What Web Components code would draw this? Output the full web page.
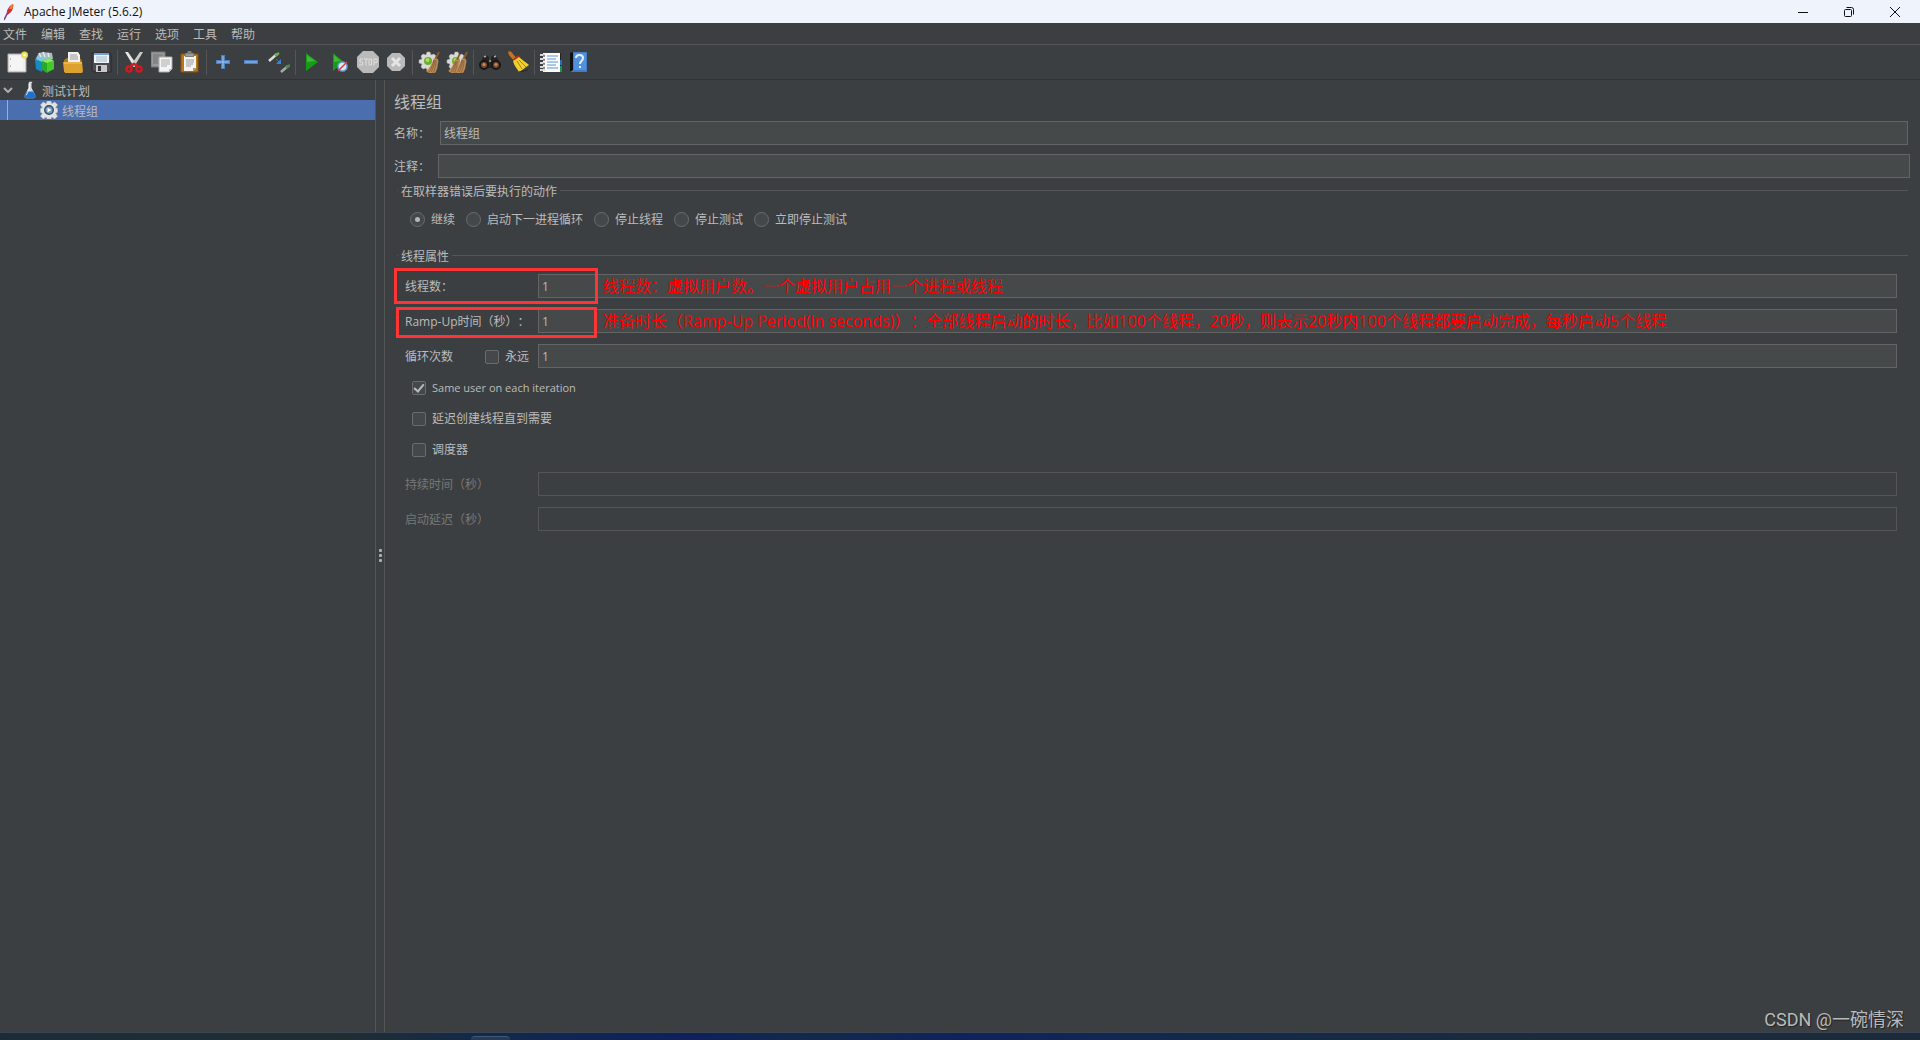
<!DOCTYPE html>
<html lang="zh-CN">
<head>
<meta charset="utf-8">
<title>Apache JMeter (5.6.2)</title>
<style>
html,body{margin:0;height:100%}
body{background:#3c3f41;color:#bbb;font:12px/16px "Open Sans","Noto Sans CJK SC",sans-serif;text-spacing-trim:space-all;overflow:hidden}
</style>
</head>
<body>
<jmeter-app></jmeter-app>
<script>
const base = `*{box-sizing:border-box}button,input{font:inherit;color:inherit;margin:0}button{border:0;padding:0;background:none}svg{display:block}`;
function define(name, css, html, setup){
  customElements.define(name, class extends HTMLElement{
    connectedCallback(){
      if(this.shadowRoot) return;
      const root = this.attachShadow({mode:'open'});
      root.innerHTML = `<style>${base}${css}</style>` + (typeof html === 'function' ? html(this) : html);
      if(setup) setup(this, root);
    }
  });
}
const broom = `<path d="M21 1l-4 8" stroke="#8a5a2c" stroke-width="2"/><path d="M16 7l4 1c0 5 0 10-3 14-4 1-7 0-9-2 4-3 6-8 8-13z" fill="#bb8a58"/><path d="M16 9c-1 5-3 9-5 12M18 9c0 5-1 9-3 13M17 9c-1 5-2 9-4 12" stroke="#7b542c" fill="none" stroke-width=".7"/>`;
const cog = `<path d="M9 1h3l1 3 3-1 2 2-1 3 3 1v3l-3 1 1 3-2 2-3-1-1 2H9l-1-2-3 1-2-2 1-3-3-1V9l3-1-1-3 2-2 3 1z" fill="#d9d9d9" stroke="#aaa" stroke-width=".5"/><circle cx="10" cy="10" r="4" fill="#6cae2b"/><circle cx="9.500" cy="9" r="2" fill="#a6e063"/>`;
const icons = {
 new:`<path d="M2 3h18v18H2z" fill="#eee" stroke="#aaa"/><path d="M4 5h13v14H4z" fill="#f5f5f5"/><path d="M4 8h1M4 15h1" stroke="#777"/><circle cx="18.500" cy="4" r="3.500" fill="#e9dc5a"/><circle cx="18.500" cy="4" r="1.500" fill="#fffbc0"/>`,
 templates:`<path d="M2 7l3-5 4-1 9 1 1 6-9 4z" fill="#a8bcc2"/><path d="M5 2l2 4M9 1l2 5M14 2l1 4" stroke="#dfe9eb" stroke-width="1.500"/><path d="M1 8l7 3v10l-6-3z" fill="#168bc2"/><path d="M1 8l5-2 5 2-3 3z" fill="#6bd1ea"/><path d="M8 10l7-3 5 3v8l-7 4-5-3z" fill="#28a92d"/><path d="M8 10l7-3 5 3-7 2z" fill="#8ce761"/><path d="M13 12v9l7-3v-8z" fill="#45c92e"/>`,
 open:`<path d="M2 9l3-2h13l2 3v11H2z" fill="#b77914"/><path d="M6 1h10l2 3v9H6z" fill="#f1f1f1"/><path d="M8 4h7M8 6h8M8 8h8" stroke="#999"/><path d="M1 11h19l1 9-1 2H3l-1-2z" fill="#dda12f"/><path d="M2 12h18" stroke="#f5cb68"/>`,
 save:`<path d="M2 2h18l1 1v18H4l-2-2z" fill="#4a4a4f" stroke="#29292c"/><path d="M4 2h15v10H4z" fill="#eef3f7"/><path d="M4 2h15v2H4z" fill="#729fcf"/><path d="M6 6h11M6 8h11M6 10h11" stroke="#a5b6c8"/><path d="M6 14h11v7H6z" fill="#c6c8ca"/><path d="M8 15h3v5H8z" fill="#333"/>`,
 cut:`<path d="M2 1h3l9 13-3 2z" fill="#e4e7e4"/><path d="M20 1h-3L8 14l3 2z" fill="#c9cdc9"/><ellipse cx="6" cy="18" rx="2.500" ry="2.500" fill="none" stroke="#d11920" stroke-width="2.500"/><ellipse cx="16" cy="18" rx="2.500" ry="2.500" fill="none" stroke="#d11920" stroke-width="2.500"/><path d="M7 15l4-2 4 2" stroke="#d11920" stroke-width="2.500" fill="none"/>`,
 copy:`<path d="M0 1h14v15H0z" fill="#9a9a9a" stroke="#777"/><path d="M2 4h10M2 6h10M2 8h5M2 10h5M2 12h5" stroke="#717171"/><path d="M8 6h13v12l-3 3H8z" fill="#f4f4f4" stroke="#aaa"/><path d="M10 9h9M10 11h9M10 13h9M10 15h6" stroke="#aaa"/><path d="M18 21v-3h3z" fill="#bbb"/>`,
 paste:`<path d="M2 3h17v18H2z" fill="#b7771d" stroke="#8a5308"/><path d="M5 5h12v12l-3 3H5z" fill="#f3f3f3"/><path d="M6 2h2l1-2h3l1 2h2v4H6z" fill="#7c7f78"/><path d="M7 4h7" stroke="#bbb"/><path d="M7 9h8M7 11h8M7 13h7M7 15h5" stroke="#999"/><path d="M14 20v-3h3z" fill="#999"/>`,
 plus:`<path d="M9 4h4v5h5v4h-5v5H9v-5H4V9h5z" fill="#4a80c4"/><path d="M11 5v12M5 11h12" stroke="#acc9ee"/>`,
 minus:`<path d="M4 9h14v4H4z" fill="#4a80c4"/><path d="M5 11h12" stroke="#a4c5ee"/>`,
 toggle:`<path d="M1 10L9 3" stroke="#ddd" stroke-width="2.500"/><path d="M7 5l4-3" stroke="#63b34c" stroke-width="2.500"/><path d="M8 8l4 4" stroke="#2e79d0"/><path d="M13 8v5H8z" fill="#3386df"/><path d="M13 21l7-6" stroke="#aaa" stroke-width="2.500"/><path d="M18 17l4-3" stroke="#4e8e42" stroke-width="2.500"/>`,
 start:`<path d="M5 2l12 9-12 9z" fill="#169b18"/><path d="M6 4l8 6-8 1z" fill="#42b638"/>`,
 startno:`<path d="M4 2l11 9L4 20z" fill="#169b18"/><path d="M5 4l7 6-7 1z" fill="#42b638"/><circle cx="13.500" cy="15.500" r="4.500" fill="#dfe6ef" stroke="#719bd0" stroke-width="1.500"/><path d="M9 20l9-9" stroke="#d13c3c" stroke-width="1.500"/>`,
 stop:`<path d="M6 0h10l6 6v10l-6 6H6l-6-6V6z" fill="#bababa"/><path d="M6 8H3v3h2.500v3H2M7 8h4M9 8v6.500M12 8h2.500v6H12zM17 14.500V8h3v3.500h-3" fill="none" stroke="#dedede"/>`,
 shutdown:`<path d="M7 2h8l5 5v8l-5 5H7l-5-5V7z" fill="#bababa"/><path d="M7 7l8 8M15 7l-8 8" stroke="#e5e5e5" stroke-width="3"/>`,
 clear:cog+broom,
 clearall:cog+broom+`<g transform="translate(-5 2) scale(.9)">${broom}</g>`,
 search:`<path d="M4 6l3-2 3 2v3h2V6l3-2 3 2 3 8v3H1v-3z" fill="#252423"/><path d="M5 6l2-1M15 6l2-1M10 10h2" stroke="#aaa" stroke-width="1.500"/><circle cx="5" cy="14" r="4" fill="#7e4730" stroke="#171717" stroke-width="2"/><circle cx="17" cy="14" r="4" fill="#7e4730" stroke="#171717" stroke-width="2"/><circle cx="5" cy="13.500" r="1.500" fill="#c68a5d"/><circle cx="17" cy="13.500" r="1.500" fill="#c68a5d"/>`,
 reset:`<path d="M1 1c2-2 4 0 5 2l4 5-3 2-5-6z" fill="#c1751d"/><path d="M6 8l5-3c4 4 8 6 11 9-4 3-7 5-10 7-2-4-6-7-6-13z" fill="#f1cf2d"/><path d="M6 9l6-4" stroke="#b23026" stroke-width="2"/><path d="M10 10l5 8M12 9l7 7" stroke="#a98314"/><path d="M12 21l9-2" stroke="#272727"/>`,
 log:`<path d="M3 2h18v18H3z" fill="#222"/><path d="M17 15h5v6h-5z" fill="#169449"/><path d="M18 9h4v5h-4z" fill="#286bc1"/><path d="M3 2h17v19H3z" fill="#fafafa"/><path d="M7 5h11M7 8h9M7 11h11M7 14h9M7 17h11" stroke="#5a97d8"/><path d="M0 4h5M0 8h5M0 12h5M0 16h5M0 19h5" stroke="#d8d8d8" stroke-width="2"/><path d="M3 5h2M3 9h2M3 13h2M3 17h2" stroke="#333"/>`,
 help:`<path d="M2 2l3-1v19l-3 1z" fill="#111"/><path d="M5 1h14v20H2l3-2z" fill="#417cc8"/><path d="M6 2h12v17H6z" fill="#5290dc"/><path d="M8 7c0-4 7-4 7 0 0 3-3 3-3 6M12 15v2" stroke="#e5effa" stroke-width="2" fill="none"/>`,
 flask:`<path d="M8 0h4v1l-1 1v6l5 10v3l-2 1H4l-2-1v-3l5-10V2z" fill="#d6dce2"/><path d="M5 13h8l3 5v3l-2 1H4l-2-1v-3z" fill="#1c73cf"/><path d="M8 3v7l-4 8" stroke="#fff" fill="none"/>`,
 gear:`<path d="M7 0h4l1 3 3-2 3 3-2 3 2 1v4l-2 1 2 3-3 3-3-2-1 2H7l-1-2-3 2-3-3 2-3-2-1V8l2-1-2-3 3-3 3 2z" fill="#e2e2e2" stroke="#b7b7b7" stroke-width=".6"/><circle cx="9" cy="9.500" r="4.500" fill="#7d9cbc" stroke="#2b4e70" stroke-width="1.500"/><path d="M7.500 7l4 2.500-4 2.500z" fill="#fff"/>`,
 feather:`<path d="M2 17l4-8" stroke="#76418a" stroke-width="1.500"/><path d="M5 12c-1-5 2-9 6-11 1 3-1 9-6 11z" fill="#d12a3c"/><path d="M7 6c1-3 2-4 4-5 1 2 0 3-1 5z" fill="#f07c2d"/>`
};
const icon=(n,w=22,h=22,v=`0 0 ${w} ${h}`)=>`<svg width="${w}" height="${h}" viewBox="${v}" fill="none" aria-hidden="true">${icons[n]}</svg>`;

define('window-title',`:host{display:flex;height:23px;background:#eff3fb;color:#111;align-items:center;padding-right:2px}
h1{font:inherit;margin:0 auto 0 10px}.f{margin-left:4px}button{width:46px;height:21px;display:grid;place-items:center}`,
`<svg class="f" width="10" height="18" viewBox="2 0 10 18" fill="none">${icons.feather}</svg><h1><slot></slot></h1>
<button aria-label="最小化"><svg width="10" height="10"><path d="M0 5.500h10" stroke="#111"/></svg></button>
<button aria-label="还原"><svg width="10" height="10" fill="none" stroke="#111"><rect x=".5" y="2.500" width="7" height="7" rx="1"/><path d="M2.500 .5h5a2 2 0 0 1 2 2v5"/></svg></button>
<button aria-label="关闭"><svg width="10" height="10"><path d="M0 0l10 10M10 0L0 10" stroke="#111"/></svg></button>`);

define('menu-bar',`:host{display:flex;height:22px;border-bottom:1px solid #555;padding:2px 0 0 3px;gap:14px;align-items:center}button{line-height:18px}`,
 ['文件','编辑','查找','运行','选项','工具','帮助'].map(t=>`<button>${t}</button>`).join(''));

define('tool-bar',`:host{display:flex;height:35px;border-bottom:1px solid #323232;padding-left:3px;align-items:center}
button{width:28px;height:28px;display:grid;place-items:center}hr{width:1px;height:25px;margin:0 2px;border:0;background:#555}`,
 [['new','templates','open','save'],['cut','copy','paste'],['plus','minus','toggle'],['start','startno','stop','shutdown'],['clear','clearall'],['search','reset'],['log','help']]
 .map(g=>g.map(n=>`<button aria-label="${n}">${icon(n)}</button>`).join('')).join('<hr>'));

define('plan-tree',`:host{display:block}.row{display:flex;height:20px;align-items:center}span{padding-top:3px}
.root{padding-left:3px;gap:6px}.root svg:first-child{margin-right:5px}
.sel{background:#4b6eaf;gap:4px}.sel i{width:1px;height:20px;background:#7ab8f5;margin:0 28px 0 7px}`,
`<div class="row root"><svg width="10" height="6" fill="none"><path d="M1 1l4 4 4-4" stroke="#adadad" stroke-width="2"/></svg>${icon('flask',12,18,'1 0 16 22')}<span>测试计划</span></div>
<div class="row sel"><i></i>${icon('gear',18,18,'0 0 18 19')}<span>线程组</span></div>`);

define('split-divider',`:host{display:flex;flex-direction:column;justify-content:center;align-items:center;gap:2px;width:10px;padding-bottom:2px;border:solid #555;border-width:0 1px}i{width:3px;height:3px;border-radius:1px;background:#b0b0b0}`,`<i></i><i></i><i></i>`);

define('field-row',`:host{display:flex;height:24px;align-items:center;position:relative}
.l{display:flex;width:var(--label,133px);align-items:center;padding-top:2px;white-space:nowrap}
input{flex:1;min-width:0;height:24px;border:1px solid #646464;background:#45494a;padding:0 3px;outline:0;border-radius:0}
:host([off]) .l{color:#777}:host([off]) input{background:transparent;border-color:#555}
.mark{position:absolute;border:3px solid #ff3535;pointer-events:none;inset:-6px auto -6px -11px;width:204px}
:host([tight]) .mark{inset:-2px auto -5px -9px;width:201px}
.note{position:absolute;left:198px;top:0;color:red;font-size:16px;line-height:24px;white-space:nowrap;pointer-events:none}`,
e=>`<div class="l"><label for="i">${e.getAttribute('label')}</label><slot></slot></div><input id="i" type="text" value="${e.getAttribute('value')||''}"${e.hasAttribute('off')?' disabled':''}>${e.hasAttribute('note')?`<div class="mark"></div><span class="note">${e.getAttribute('note')}</span>`:''}`);

define('check-option',`:host{display:flex}:host([lang=en]){font-size:11px}label{display:flex;align-items:center;gap:6px}
input{appearance:none;width:14px;height:14px;border:1px solid #6b6b6b;border-radius:2px;background:#43494a;display:grid;place-items:center}
input:checked::after{content:"";width:4px;height:8px;border:solid #bbb;border-width:0 2px 2px 0;transform:translateY(-1px) rotate(40deg)}`,
e=>`<label><input type="checkbox"${e.hasAttribute('checked')?' checked':''}><span><slot></slot></span></label>`);

define('group-box',`:host{display:block}fieldset{border:0;border-top:1px solid #555;margin:0;padding:0;min-width:0}legend{margin-left:1px;padding:2px 3px 0;line-height:15px}`,
`<fieldset><legend></legend><slot></slot></fieldset>`,(e,r)=>{r.querySelector('legend').textContent=e.getAttribute('label')});

define('error-action',`:host{display:flex;gap:11px;padding:12px 0 0 13px}label{display:flex;align-items:center;gap:6px;line-height:17px}
input{appearance:none;width:15px;height:15px;border:1px solid #6b6b6b;border-radius:50%;background:#43494a;display:grid;place-items:center}
input:checked::after{content:"";width:5px;height:5px;border-radius:50%;background:#b5b5b5}`,
['继续','启动下一进程循环','停止线程','停止测试','立即停止测试'].map((t,i)=>`<label><input type="radio" name="a"${i?'':' checked'}>${t}</label>`).join(''));

define('thread-group',`:host{display:block;padding:12px 10px 0 9px}h2{font-size:16px;line-height:20px;font-weight:400;margin:0 0 9px}
.name{--label:46px;margin-right:2px}.comment{--label:44px;margin-top:9px}
group-box{margin:4px 2px 0 3px}.props{margin-top:19px}.rows{display:flex;flex-direction:column;gap:11px;padding:10px 11px 0 8px}
.checks{display:flex;flex-direction:column;gap:15px;padding:1px 0 3px 7px}.checks check-option{height:16px}.forever{margin-left:32px}`,
`<h2>线程组</h2>
<field-row class="name" label="名称：" value="线程组"></field-row>
<field-row class="comment" label="注释："></field-row>
<group-box label="在取样器错误后要执行的动作"><error-action></error-action></group-box>
<group-box class="props" label="线程属性"><div class="rows">
<field-row label="线程数：" value="1" note="线程数：虚拟用户数。一个虚拟用户占用一个进程或线程"></field-row>
<field-row tight label="Ramp-Up时间（秒）：" value="1" note="准备时长（Ramp-Up Period(in seconds)）：全部线程启动的时长，比如100个线程，20秒，则表示20秒内100个线程都要启动完成，每秒启动5个线程"></field-row>
<field-row label="循环次数" value="1"><check-option class="forever">永远</check-option></field-row>
<div class="checks"><check-option lang="en" checked>Same user on each iteration</check-option><check-option>延迟创建线程直到需要</check-option><check-option>调度器</check-option></div>
<field-row off label="持续时间（秒）"></field-row><field-row off label="启动延迟（秒）"></field-row>
</div></group-box>`);

define('task-strip',`:host{display:block;height:8px;border-top:1px solid #3b4552;background:linear-gradient(90deg,#1d2b38,#202e32 18%,#12294a 25%,#0f205c 36%,#12294a 42%,#10225c 50%,#12294a 62%,#1b2b3c 80%,#1b2b3c);overflow:hidden}
i{display:block;height:5px;width:39px;margin:3px 0 0 471px;background:#263a56;border-top:1px solid #425a75;border-radius:4px 4px 0 0}`,`<i></i>`);

define('jmeter-app',`:host{display:flex;flex-direction:column;height:100vh;position:relative}main{flex:1;display:grid;grid-template-columns:375px auto 1fr;min-height:0}
.wm{position:absolute;right:16px;bottom:7px;font:18px/26px Roboto,"Noto Sans CJK SC",sans-serif;color:#b9b9b9;text-shadow:1px 1px 1px #222}`,
`<window-title>Apache JMeter (5.6.2)</window-title><menu-bar></menu-bar><tool-bar></tool-bar>
<main><plan-tree></plan-tree><split-divider></split-divider><thread-group></thread-group></main>
<task-strip></task-strip><span class="wm">CSDN @一碗情深</span>`);
</script>
</body>
</html>
